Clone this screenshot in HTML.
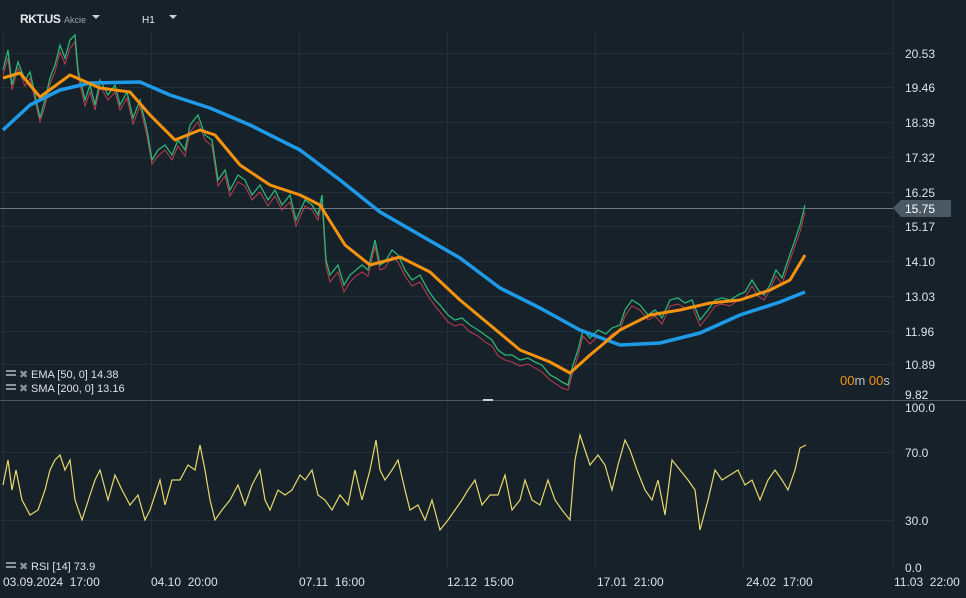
<!DOCTYPE html><html><head><meta charset="utf-8"><style>
body{margin:0;background:#17212a;width:966px;height:598px;overflow:hidden;font-family:"Liberation Sans",sans-serif}
svg{position:absolute;left:0;top:0}
</style></head><body>
<svg width="966" height="598" viewBox="0 0 966 598" font-family="Liberation Sans, sans-serif">
<rect width="966" height="598" fill="#17212a"/>
<g stroke="#222e38" stroke-width="1">
<line x1="3.5" y1="30" x2="3.5" y2="570"/><line x1="151.5" y1="30" x2="151.5" y2="570"/><line x1="299.5" y1="30" x2="299.5" y2="570"/><line x1="447.5" y1="30" x2="447.5" y2="570"/><line x1="595.5" y1="30" x2="595.5" y2="570"/><line x1="743.5" y1="30" x2="743.5" y2="570"/><line x1="893.5" y1="0" x2="893.5" y2="570"/>
<line x1="0" y1="53.5" x2="893" y2="53.5"/><line x1="0" y1="87.5" x2="893" y2="87.5"/><line x1="0" y1="122.5" x2="893" y2="122.5"/><line x1="0" y1="157.5" x2="893" y2="157.5"/><line x1="0" y1="192.5" x2="893" y2="192.5"/><line x1="0" y1="226.5" x2="893" y2="226.5"/><line x1="0" y1="261.5" x2="893" y2="261.5"/><line x1="0" y1="296.5" x2="893" y2="296.5"/><line x1="0" y1="331.5" x2="893" y2="331.5"/><line x1="0" y1="364.5" x2="893" y2="364.5"/>
<line x1="0" y1="452.5" x2="893" y2="452.5"/><line x1="0" y1="520.5" x2="893" y2="520.5"/>
</g>
<line x1="0" y1="400.5" x2="966" y2="400.5" stroke="#4a5660"/>
<line x1="0" y1="208.5" x2="893" y2="208.5" stroke="#6b7883"/>
<rect x="483" y="399" width="10" height="2" fill="#c9d0d6"/>
<!-- price -->
<polyline fill="none" stroke="#e8435a" stroke-width="1" opacity="0.8" points="3,75 8,58 12,90 18,68 25,86 30,78 35,100 40,122 45,106 50,84 55,72 60,52 65,64 70,48 75,42 78,76 85,106 90,92 95,110 100,86 108,100 115,92 120,110 127,98 133,124 140,106 147,136 152,164 158,156 165,150 172,160 178,146 185,156 190,132 198,122 205,140 212,146 218,186 225,176 230,196 238,182 245,186 252,200 260,192 268,206 275,196 282,210 290,202 296,226 305,206 312,210 318,220 322,202 326,266 330,282 338,272 344,292 350,282 356,276 362,272 368,276 375,246 380,270 385,268 392,256 398,262 405,276 412,286 420,282 428,296 435,306 440,312 448,322 455,326 462,324 470,332 478,336 485,342 492,346 498,356 505,360 512,362 520,366 528,364 535,368 542,372 550,380 556,384 562,388 568,390 573,372 578,356 583,336 590,344 598,336 606,340 612,334 620,330 625,316 632,306 640,310 648,320 655,316 662,324 670,306 678,304 685,308 692,306 700,326 708,316 715,306 722,304 730,306 738,300 745,298 752,286 758,296 764,300 770,290 776,276 782,284 788,266 795,246 800,232 805,212"/>
<polyline fill="none" stroke="#2bb673" stroke-width="1.3" points="3,70 8,50 12,85 18,62 25,80 30,72 35,95 40,118 45,100 50,78 55,65 60,45 65,58 70,40 75,35 78,70 85,100 90,85 95,105 100,80 108,95 115,85 120,105 127,92 133,118 140,100 147,130 152,160 158,150 165,145 172,155 178,140 185,150 190,125 198,115 205,135 212,140 218,180 225,170 230,190 238,175 245,180 252,195 260,185 268,200 275,190 282,205 290,195 296,220 305,200 312,205 318,215 322,195 326,260 330,275 338,265 344,285 350,275 356,270 362,265 368,270 375,240 380,265 385,262 392,250 398,255 405,270 412,280 420,275 428,290 435,300 440,305 448,315 455,320 462,318 470,325 478,330 485,335 492,340 498,350 505,355 512,355 520,360 528,358 535,362 542,365 550,375 556,378 562,382 568,385 573,365 578,350 583,330 590,338 598,330 606,334 612,328 620,325 625,310 632,300 640,305 648,315 655,310 662,318 670,300 678,298 685,303 692,300 700,320 708,310 715,300 722,298 730,300 738,295 745,292 752,280 758,290 764,295 770,285 776,270 782,278 788,260 795,240 800,225 805,205"/>
<!-- SMA -->
<polyline fill="none" stroke="#1e9be8" stroke-width="3.5" stroke-linejoin="round" points="3,130 30,105 60,90 90,83 140,82 170,95 210,108 250,125 300,150 340,180 380,212 420,235 460,258 500,288 540,308 580,330 620,345 660,343 700,333 740,315 780,302 805,292"/>
<!-- EMA -->
<polyline fill="none" stroke="#f5930f" stroke-width="3" stroke-linejoin="round" points="3,78 20,73 40,97 70,75 100,88 130,92 150,115 175,140 200,130 215,135 240,165 270,185 300,195 320,205 345,245 370,265 400,257 430,272 460,300 490,325 520,350 550,362 570,373 590,355 620,330 650,315 680,310 710,303 740,300 770,290 790,280 805,255"/>
<!-- RSI -->
<polyline fill="none" stroke="#e6d96a" stroke-width="1.2" points="3,485 8,460 12,490 16,470 22,500 30,515 38,510 45,490 50,470 55,460 60,455 65,470 70,460 75,500 82,520 90,495 95,480 100,470 108,500 115,475 122,490 130,505 138,495 145,520 150,510 155,495 160,480 165,505 172,480 180,480 188,465 195,470 200,445 205,470 210,500 215,520 222,510 230,500 238,485 245,505 252,485 260,470 265,500 270,510 278,490 285,495 292,490 300,475 305,480 312,470 318,495 325,500 332,510 340,495 348,505 355,470 362,500 370,470 376,440 380,470 385,480 392,470 398,460 405,490 410,510 418,505 425,520 432,500 440,530 448,520 455,510 462,500 468,490 475,480 482,505 490,495 498,495 505,475 512,510 520,500 525,480 532,500 540,505 548,480 555,500 562,510 570,520 575,460 580,435 585,450 590,465 598,455 605,465 612,490 618,465 625,440 630,450 637,470 645,490 652,500 658,480 665,515 672,460 680,470 688,480 695,490 700,530 708,500 715,470 722,480 730,475 738,470 745,485 752,480 760,500 768,480 775,470 782,480 788,490 795,470 800,448 806,445"/>
<g font-size="12">
<text x="20" y="23" font-weight="bold" font-size="12" fill="#e6eaee" letter-spacing="-0.5">RKT.US</text>
<text x="64" y="23" font-size="9" fill="#9aa5ad">Akcie</text>
<path d="M92 15h8l-4 4z" fill="#c9d0d6"/>
<text x="142" y="23" font-size="10" fill="#e6eaee">H1</text>
<path d="M169 15h8l-4 4z" fill="#c9d0d6"/>
</g>
<g fill="#dde2e6" font-size="12">
<text x="905" y="58">20.53</text><text x="905" y="92">19.46</text><text x="905" y="127">18.39</text><text x="905" y="162">17.32</text><text x="905" y="197">16.25</text><text x="905" y="231">15.17</text><text x="905" y="266">14.10</text><text x="905" y="301">13.03</text><text x="905" y="336">11.96</text><text x="905" y="369">10.89</text><text x="905" y="399">9.82</text>
<text x="905" y="412">100.0</text><text x="905" y="457">70.0</text><text x="905" y="525">30.0</text><text x="905" y="572">0.0</text>
</g>
<path d="M893 208l8-8h50v17h-50z" fill="#4a5864"/>
<text x="905" y="213" fill="#ffffff" font-size="12">15.75</text>
<text x="840" y="385" font-size="13" fill="#f5930f">00<tspan fill="#b8c0c6">m </tspan>00<tspan fill="#b8c0c6">s</tspan></text>
<g fill="#dde2e6" font-size="11">
<rect x="6" y="370" width="10" height="2" fill="#8a949c"/><rect x="6" y="374" width="10" height="2" fill="#8a949c"/><text x="19" y="378" fill="#8a949c">✖</text><text x="31" y="378">EMA [50, 0] 14.38</text>
<rect x="6" y="384" width="10" height="2" fill="#8a949c"/><rect x="6" y="388" width="10" height="2" fill="#8a949c"/><text x="19" y="392" fill="#8a949c">✖</text><text x="31" y="392">SMA [200, 0] 13.16</text>
<rect x="6" y="562" width="10" height="2" fill="#8a949c"/><rect x="6" y="566" width="10" height="2" fill="#8a949c"/><text x="19" y="570" fill="#8a949c">✖</text><text x="31" y="570">RSI [14] 73.9</text>
</g>
<g fill="#dde2e6" font-size="12">
<text x="3" y="586">03.09.2024&#160;&#160;17:00</text><text x="151" y="586">04.10&#160;&#160;20:00</text><text x="299" y="586">07.11&#160;&#160;16:00</text><text x="447" y="586">12.12&#160;&#160;15:00</text><text x="597" y="586">17.01&#160;&#160;21:00</text><text x="746" y="586">24.02&#160;&#160;17:00</text><text x="894" y="586">11.03&#160;&#160;22:00</text>
</g>
</svg>
</body></html>
